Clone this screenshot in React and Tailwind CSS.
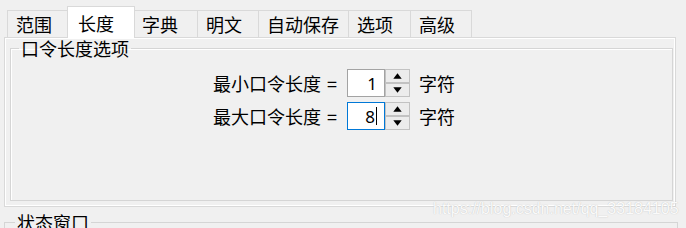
import React from "react";

const tabs = [
    { label: "范围", w: "w-[62px]" },
    { label: "长度", w: "w-[68px]", active: true },
    { label: "字典", w: "w-[64px]" },
    { label: "明文", w: "w-[61px]" },
    { label: "自动保存", w: "w-[90px]" },
    { label: "选项", w: "w-[62px]" },
    { label: "高级", w: "w-[62px]", last: true },
];

function Tab({ label, w, active, last }) {
    if (active) {
        return (
            <div
                className={`relative z-10 -mx-[2px] -mb-px flex h-[32px] items-center border-x border-t border-[#d9d9d9] bg-white pl-[10px] leading-none ${w}`}
            >
                {label}
            </div>
        );
    }
    return (
        <div
            className={`flex h-[27px] items-center border-l border-t border-[#d9d9d9] bg-[#f0f0f0] pl-[8px] leading-none ${w} ${last ? "border-r" : ""}`}
        >
            {label}
        </div>
    );
}

function SpinArrow({ up }) {
    return (
        <div className="flex h-[14px] items-center justify-center border border-[#c2c2c2] bg-[#ececec]">
            <svg width="9" height="6" viewBox="0 0 9 6">
                {up ? <path d="M4.5 0.3 L8.7 5.7 L0.3 5.7 Z" fill="#000" /> : <path d="M0.3 0.3 L8.7 0.3 L4.5 5.7 Z" fill="#000" />}
            </svg>
        </div>
    );
}

function LengthRow({ label, value, focused }) {
    return (
        <div className="flex h-[28px] items-center">
            <div className="w-[134px] leading-none">
                {label}
                <span className="ml-[6px]">=</span>
            </div>
            <div
                className={`flex h-[28px] w-[38px] items-center justify-end border bg-white pr-[7px] font-['Noto_Sans',sans-serif] text-[17px] leading-none ${
                    focused ? "border-[#0078d7]" : "border-[#a3a3a3]"
                }`}
            >
                {value}
                {focused && <span className="ml-px h-[18px] w-px bg-black" />}
            </div>
            <div className="flex w-[25px] flex-col">
                <SpinArrow up />
                <SpinArrow />
            </div>
            <div className="ml-[9px] leading-none">字符</div>
        </div>
    );
}

export default function App() {
    return (
        <div className="relative h-[228px] w-[686px] overflow-hidden bg-[#f0f0f0] font-['Noto_Sans_CJK_SC',sans-serif] text-[18px] text-black">
            <div className="flex items-end pl-[7px] pt-[6px]">
                {tabs.map((tab) => (
                    <Tab key={tab.label} {...tab} />
                ))}
            </div>

            <div className="ml-[4px] h-[170px] w-[672px] border border-[#d9d9d9]">
                <div className="h-full border border-white pl-[4px] pr-px">
                    <fieldset className="h-[162px] border border-[#d5d5d5] shadow-[inset_1px_1px_0_#ffffff]">
                        <legend className="ml-[8px] px-[2px] leading-[18px]">口令长度选项</legend>
                        <div className="mt-[12px] flex flex-col gap-[5px] pl-[202px]">
                            <LengthRow label="最小口令长度" value="1" />
                            <LengthRow label="最大口令长度" value="8" focused />
                        </div>
                    </fieldset>
                </div>
            </div>

            <fieldset className="ml-[4px] mt-[6px] h-[40px] w-[674px] border border-[#d5d5d5]">
                <legend className="ml-[10px] px-[2px] leading-[18px]">状态窗口</legend>
            </fieldset>

            <div className="absolute left-[433px] top-[201px] font-['Liberation_Sans',sans-serif] text-[16px] leading-none text-[#fafafa] [text-shadow:0_0_1px_#b8b8b8]">
                https://blog.csdn.net/qq_33184105
            </div>
        </div>
    );
}
